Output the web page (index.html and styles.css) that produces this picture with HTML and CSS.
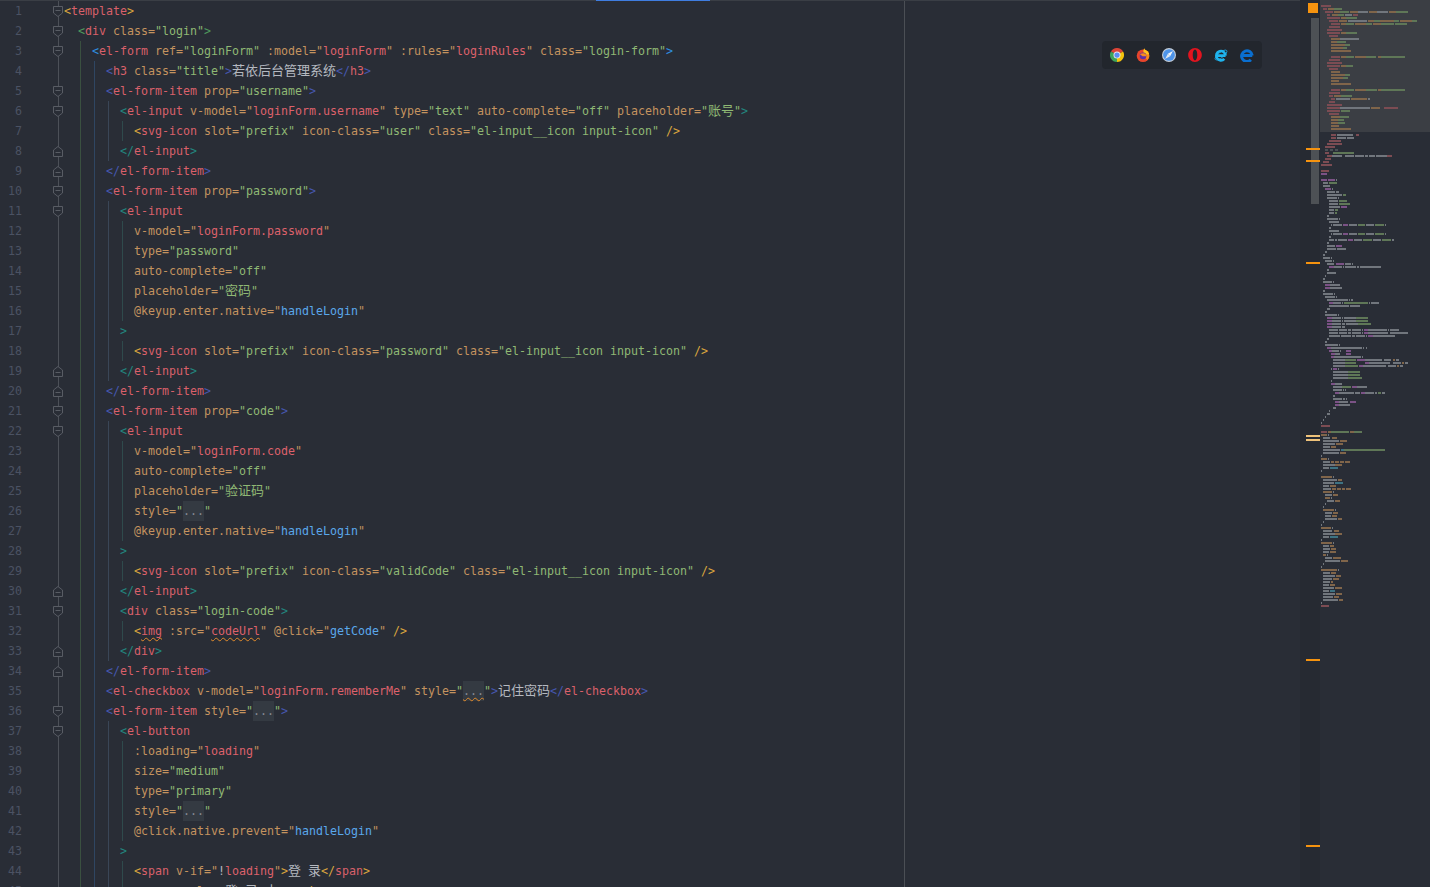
FILE: index.html
```
<!DOCTYPE html>
<html lang="zh">
<head>
<meta charset="utf-8">
<title>Login.vue</title>
<link rel="stylesheet" href="styles.css">
</head>
<body>
<svg class="defs" width="0" height="0" aria-hidden="true">
<symbol id="fold-open" viewBox="0 0 10 11"><path d="M.5 .5h9v6.5l-4.5 3.5-4.5-3.5z" class="fm"/><path d="M2.5 4.5h5" class="fm"/></symbol>
<symbol id="fold-close" viewBox="0 0 10 11"><path d="M.5 10.5h9v-6.5l-4.5-3.5-4.5 3.5z" class="fm"/><path d="M2.5 6.5h5" class="fm"/></symbol>
</svg>
<div class="app">
<main class="editor">
<div class="rows">
<div class="row"><span class="num">1</span><span class="fold"><svg class="fi"><use href="#fold-open"/></svg></span><code class="code"><span class="y">&lt;</span><span class="t">template</span><span class="y">&gt;</span></code></div>
<div class="row"><span class="num">2</span><span class="fold"><svg class="fi"><use href="#fold-open"/></svg></span><code class="code"><i class="g0"></i><span class="g">&lt;</span><span class="t">div</span> <span class="a">class=</span><span class="s">"login"</span><span class="g">&gt;</span></code></div>
<div class="row"><span class="num">3</span><span class="fold"><svg class="fi"><use href="#fold-open"/></svg></span><code class="code"><i class="g0"></i><i class="g1"></i><span class="l">&lt;</span><span class="t">el-form</span> <span class="a">ref=</span><span class="s">"loginForm"</span> <span class="a">:model="</span><span class="r">loginForm</span><span class="a">"</span> <span class="a">:rules="</span><span class="r">loginRules</span><span class="a">"</span> <span class="a">class=</span><span class="s">"login-form"</span><span class="l">&gt;</span></code></div>
<div class="row"><span class="num">4</span><span class="fold"></span><code class="code"><i class="g0"></i><i class="g1"></i><i class="g2"></i><span class="n">&lt;</span><span class="t">h3</span> <span class="a">class=</span><span class="s">"title"</span><span class="n">&gt;</span><span class="c">若依后台管理系统</span><span class="n">&lt;/</span><span class="t">h3</span><span class="n">&gt;</span></code></div>
<div class="row"><span class="num">5</span><span class="fold"><svg class="fi"><use href="#fold-open"/></svg></span><code class="code"><i class="g0"></i><i class="g1"></i><i class="g2"></i><span class="n">&lt;</span><span class="t">el-form-item</span> <span class="a">prop=</span><span class="s">"username"</span><span class="n">&gt;</span></code></div>
<div class="row"><span class="num">6</span><span class="fold"><svg class="fi"><use href="#fold-open"/></svg></span><code class="code"><i class="g0"></i><i class="g1"></i><i class="g2"></i><i class="g3"></i><span class="e">&lt;</span><span class="t">el-input</span> <span class="a">v-model="</span><span class="r">loginForm.username</span><span class="a">"</span> <span class="a">type=</span><span class="s">"text"</span> <span class="a">auto-complete=</span><span class="s">"off"</span> <span class="a">placeholder=</span><span class="s">"<span class="c">账号</span>"</span><span class="e">&gt;</span></code></div>
<div class="row"><span class="num">7</span><span class="fold"></span><code class="code"><i class="g0"></i><i class="g1"></i><i class="g2"></i><i class="g3"></i><i class="g4"></i><span class="y">&lt;</span><span class="t">svg-icon</span> <span class="a">slot=</span><span class="s">"prefix"</span> <span class="a">icon-class=</span><span class="s">"user"</span> <span class="a">class=</span><span class="s">"el-input__icon input-icon"</span> <span class="y">/&gt;</span></code></div>
<div class="row"><span class="num">8</span><span class="fold"><svg class="fi"><use href="#fold-close"/></svg></span><code class="code"><i class="g0"></i><i class="g1"></i><i class="g2"></i><i class="g3"></i><span class="e">&lt;/</span><span class="t">el-input</span><span class="e">&gt;</span></code></div>
<div class="row"><span class="num">9</span><span class="fold"><svg class="fi"><use href="#fold-close"/></svg></span><code class="code"><i class="g0"></i><i class="g1"></i><i class="g2"></i><span class="n">&lt;/</span><span class="t">el-form-item</span><span class="n">&gt;</span></code></div>
<div class="row"><span class="num">10</span><span class="fold"><svg class="fi"><use href="#fold-open"/></svg></span><code class="code"><i class="g0"></i><i class="g1"></i><i class="g2"></i><span class="n">&lt;</span><span class="t">el-form-item</span> <span class="a">prop=</span><span class="s">"password"</span><span class="n">&gt;</span></code></div>
<div class="row"><span class="num">11</span><span class="fold"><svg class="fi"><use href="#fold-open"/></svg></span><code class="code"><i class="g0"></i><i class="g1"></i><i class="g2"></i><i class="g3"></i><span class="e">&lt;</span><span class="t">el-input</span></code></div>
<div class="row"><span class="num">12</span><span class="fold"></span><code class="code"><i class="g0"></i><i class="g1"></i><i class="g2"></i><i class="g3"></i><i class="g4"></i><span class="a">v-model="</span><span class="r">loginForm.password</span><span class="a">"</span></code></div>
<div class="row"><span class="num">13</span><span class="fold"></span><code class="code"><i class="g0"></i><i class="g1"></i><i class="g2"></i><i class="g3"></i><i class="g4"></i><span class="a">type=</span><span class="s">"password"</span></code></div>
<div class="row"><span class="num">14</span><span class="fold"></span><code class="code"><i class="g0"></i><i class="g1"></i><i class="g2"></i><i class="g3"></i><i class="g4"></i><span class="a">auto-complete=</span><span class="s">"off"</span></code></div>
<div class="row"><span class="num">15</span><span class="fold"></span><code class="code"><i class="g0"></i><i class="g1"></i><i class="g2"></i><i class="g3"></i><i class="g4"></i><span class="a">placeholder=</span><span class="s">"<span class="c">密码</span>"</span></code></div>
<div class="row"><span class="num">16</span><span class="fold"></span><code class="code"><i class="g0"></i><i class="g1"></i><i class="g2"></i><i class="g3"></i><i class="g4"></i><span class="a">@keyup.enter.native="</span><span class="h">handleLogin</span><span class="a">"</span></code></div>
<div class="row"><span class="num">17</span><span class="fold"></span><code class="code"><i class="g0"></i><i class="g1"></i><i class="g2"></i><i class="g3"></i><span class="e">&gt;</span></code></div>
<div class="row"><span class="num">18</span><span class="fold"></span><code class="code"><i class="g0"></i><i class="g1"></i><i class="g2"></i><i class="g3"></i><i class="g4"></i><span class="y">&lt;</span><span class="t">svg-icon</span> <span class="a">slot=</span><span class="s">"prefix"</span> <span class="a">icon-class=</span><span class="s">"password"</span> <span class="a">class=</span><span class="s">"el-input__icon input-icon"</span> <span class="y">/&gt;</span></code></div>
<div class="row"><span class="num">19</span><span class="fold"><svg class="fi"><use href="#fold-close"/></svg></span><code class="code"><i class="g0"></i><i class="g1"></i><i class="g2"></i><i class="g3"></i><span class="e">&lt;/</span><span class="t">el-input</span><span class="e">&gt;</span></code></div>
<div class="row"><span class="num">20</span><span class="fold"><svg class="fi"><use href="#fold-close"/></svg></span><code class="code"><i class="g0"></i><i class="g1"></i><i class="g2"></i><span class="n">&lt;/</span><span class="t">el-form-item</span><span class="n">&gt;</span></code></div>
<div class="row"><span class="num">21</span><span class="fold"><svg class="fi"><use href="#fold-open"/></svg></span><code class="code"><i class="g0"></i><i class="g1"></i><i class="g2"></i><span class="n">&lt;</span><span class="t">el-form-item</span> <span class="a">prop=</span><span class="s">"code"</span><span class="n">&gt;</span></code></div>
<div class="row"><span class="num">22</span><span class="fold"><svg class="fi"><use href="#fold-open"/></svg></span><code class="code"><i class="g0"></i><i class="g1"></i><i class="g2"></i><i class="g3"></i><span class="e">&lt;</span><span class="t">el-input</span></code></div>
<div class="row"><span class="num">23</span><span class="fold"></span><code class="code"><i class="g0"></i><i class="g1"></i><i class="g2"></i><i class="g3"></i><i class="g4"></i><span class="a">v-model="</span><span class="r">loginForm.code</span><span class="a">"</span></code></div>
<div class="row"><span class="num">24</span><span class="fold"></span><code class="code"><i class="g0"></i><i class="g1"></i><i class="g2"></i><i class="g3"></i><i class="g4"></i><span class="a">auto-complete=</span><span class="s">"off"</span></code></div>
<div class="row"><span class="num">25</span><span class="fold"></span><code class="code"><i class="g0"></i><i class="g1"></i><i class="g2"></i><i class="g3"></i><i class="g4"></i><span class="a">placeholder=</span><span class="s">"<span class="c">验证码</span>"</span></code></div>
<div class="row"><span class="num">26</span><span class="fold"></span><code class="code"><i class="g0"></i><i class="g1"></i><i class="g2"></i><i class="g3"></i><i class="g4"></i><span class="a">style=</span><span class="s">"</span><span class="f">...</span><span class="s">"</span></code></div>
<div class="row"><span class="num">27</span><span class="fold"></span><code class="code"><i class="g0"></i><i class="g1"></i><i class="g2"></i><i class="g3"></i><i class="g4"></i><span class="a">@keyup.enter.native="</span><span class="h">handleLogin</span><span class="a">"</span></code></div>
<div class="row"><span class="num">28</span><span class="fold"></span><code class="code"><i class="g0"></i><i class="g1"></i><i class="g2"></i><i class="g3"></i><span class="e">&gt;</span></code></div>
<div class="row"><span class="num">29</span><span class="fold"></span><code class="code"><i class="g0"></i><i class="g1"></i><i class="g2"></i><i class="g3"></i><i class="g4"></i><span class="y">&lt;</span><span class="t">svg-icon</span> <span class="a">slot=</span><span class="s">"prefix"</span> <span class="a">icon-class=</span><span class="s">"validCode"</span> <span class="a">class=</span><span class="s">"el-input__icon input-icon"</span> <span class="y">/&gt;</span></code></div>
<div class="row"><span class="num">30</span><span class="fold"><svg class="fi"><use href="#fold-close"/></svg></span><code class="code"><i class="g0"></i><i class="g1"></i><i class="g2"></i><i class="g3"></i><span class="e">&lt;/</span><span class="t">el-input</span><span class="e">&gt;</span></code></div>
<div class="row"><span class="num">31</span><span class="fold"><svg class="fi"><use href="#fold-open"/></svg></span><code class="code"><i class="g0"></i><i class="g1"></i><i class="g2"></i><i class="g3"></i><span class="e">&lt;</span><span class="t">div</span> <span class="a">class=</span><span class="s">"login-code"</span><span class="e">&gt;</span></code></div>
<div class="row"><span class="num">32</span><span class="fold"></span><code class="code"><i class="g0"></i><i class="g1"></i><i class="g2"></i><i class="g3"></i><i class="g4"></i><span class="y">&lt;</span><span class="t w">img</span> <span class="a">:src="</span><span class="r w">codeUrl</span><span class="a">"</span> <span class="a">@click="</span><span class="h">getCode</span><span class="a">"</span> <span class="y">/&gt;</span></code></div>
<div class="row"><span class="num">33</span><span class="fold"><svg class="fi"><use href="#fold-close"/></svg></span><code class="code"><i class="g0"></i><i class="g1"></i><i class="g2"></i><i class="g3"></i><span class="e">&lt;/</span><span class="t">div</span><span class="e">&gt;</span></code></div>
<div class="row"><span class="num">34</span><span class="fold"><svg class="fi"><use href="#fold-close"/></svg></span><code class="code"><i class="g0"></i><i class="g1"></i><i class="g2"></i><span class="n">&lt;/</span><span class="t">el-form-item</span><span class="n">&gt;</span></code></div>
<div class="row"><span class="num">35</span><span class="fold"></span><code class="code"><i class="g0"></i><i class="g1"></i><i class="g2"></i><span class="n">&lt;</span><span class="t">el-checkbox</span> <span class="a">v-model="</span><span class="r">loginForm.rememberMe</span><span class="a">"</span> <span class="a">style=</span><span class="s">"</span><span class="f w">...</span><span class="s">"</span><span class="n">&gt;</span><span class="c">记住密码</span><span class="n">&lt;/</span><span class="t">el-checkbox</span><span class="n">&gt;</span></code></div>
<div class="row"><span class="num">36</span><span class="fold"><svg class="fi"><use href="#fold-open"/></svg></span><code class="code"><i class="g0"></i><i class="g1"></i><i class="g2"></i><span class="n">&lt;</span><span class="t">el-form-item</span> <span class="a">style=</span><span class="s">"</span><span class="f">...</span><span class="s">"</span><span class="n">&gt;</span></code></div>
<div class="row"><span class="num">37</span><span class="fold"><svg class="fi"><use href="#fold-open"/></svg></span><code class="code"><i class="g0"></i><i class="g1"></i><i class="g2"></i><i class="g3"></i><span class="e">&lt;</span><span class="t">el-button</span></code></div>
<div class="row"><span class="num">38</span><span class="fold"></span><code class="code"><i class="g0"></i><i class="g1"></i><i class="g2"></i><i class="g3"></i><i class="g4"></i><span class="a">:loading="</span><span class="r">loading</span><span class="a">"</span></code></div>
<div class="row"><span class="num">39</span><span class="fold"></span><code class="code"><i class="g0"></i><i class="g1"></i><i class="g2"></i><i class="g3"></i><i class="g4"></i><span class="a">size=</span><span class="s">"medium"</span></code></div>
<div class="row"><span class="num">40</span><span class="fold"></span><code class="code"><i class="g0"></i><i class="g1"></i><i class="g2"></i><i class="g3"></i><i class="g4"></i><span class="a">type=</span><span class="s">"primary"</span></code></div>
<div class="row"><span class="num">41</span><span class="fold"></span><code class="code"><i class="g0"></i><i class="g1"></i><i class="g2"></i><i class="g3"></i><i class="g4"></i><span class="a">style=</span><span class="s">"</span><span class="f">...</span><span class="s">"</span></code></div>
<div class="row"><span class="num">42</span><span class="fold"></span><code class="code"><i class="g0"></i><i class="g1"></i><i class="g2"></i><i class="g3"></i><i class="g4"></i><span class="a">@click.native.prevent="</span><span class="h">handleLogin</span><span class="a">"</span></code></div>
<div class="row"><span class="num">43</span><span class="fold"></span><code class="code"><i class="g0"></i><i class="g1"></i><i class="g2"></i><i class="g3"></i><span class="e">&gt;</span></code></div>
<div class="row"><span class="num">44</span><span class="fold"></span><code class="code"><i class="g0"></i><i class="g1"></i><i class="g2"></i><i class="g3"></i><i class="g4"></i><span class="y">&lt;</span><span class="t">span</span> <span class="a">v-if="</span><span class="p">!</span><span class="r">loading</span><span class="a">"</span><span class="y">&gt;</span><span class="c">登</span> <span class="c">录</span><span class="y">&lt;/</span><span class="t">span</span><span class="y">&gt;</span></code></div>
<div class="row"><span class="num">45</span><span class="fold"></span><code class="code"><i class="g0"></i><i class="g1"></i><i class="g2"></i><i class="g3"></i><i class="g4"></i><span class="y">&lt;</span><span class="t">span</span> <span class="a">v-else</span><span class="y">&gt;</span><span class="c">登</span> <span class="c">录</span> <span class="c">中</span><span class="p">...</span><span class="y">&lt;/</span><span class="t">span</span><span class="y">&gt;</span></code></div>
</div>
<div class="margin-line"></div>
<div class="tab-mark"></div>
<nav class="browsers">
<svg class="bi" viewBox="0 0 16 16"><path d="M8 8L1.07 4A8 8 0 0 1 14.93 4Z" fill="#db4437"/><path d="M8 8L14.93 4A8 8 0 0 1 8 16Z" fill="#f4c20d"/><path d="M8 8L8 16A8 8 0 0 1 1.07 4Z" fill="#3da35a"/><circle cx="8" cy="8" r="4" fill="#e8eaed"/><circle cx="8" cy="8" r="3" fill="#5a8df0"/></svg>
<svg class="bi" viewBox="0 0 16 16"><circle cx="8" cy="8.8" r="7.2" fill="#e8452c"/><path d="M8 1.600a7.200 7.200 0 0 1 7.200 7.200c0 2-.8 3.600-2 4.800L8 9z" fill="#f78a1d"/><path d="M9.500 0c.3 1.800 1.500 2.500 3 3.300 1.300.8 2.300 2.200 2.500 3.800L10.500 7.500C9 6 8.500 3 9.500 0z" fill="#ffc21f"/><circle cx="8" cy="9" r="3.800" fill="#5b2fa8"/><path d="M4.500 7c1.500-1 3.500-1.200 5.500-.6 1.300.5 1.800 1.600 1.600 2.900L7.500 9.300z" fill="#f78a1d"/></svg>
<svg class="bi" viewBox="0 0 16 16"><circle cx="8" cy="8" r="8" fill="#c3cdd9"/><circle cx="8" cy="8" r="6.700" fill="#4d94ea"/><path d="M12.500 3.500L9.300 9.300 6.700 6.700z" fill="#f4f6f9"/><path d="M3.500 12.500L6.700 6.700 9.300 9.300z" fill="#dce6f2"/></svg>
<svg class="bi" viewBox="0 0 16 16"><path fill-rule="evenodd" d="M8 0c4.200 0 7.800 3.500 7.800 8S12.200 16 8 16 .2 12.500.2 8 3.800 0 8 0zm0 1.800C6.500 1.800 5.400 4.600 5.400 8s1.100 6.200 2.600 6.200S10.600 11.400 10.600 8 9.500 1.800 8 1.800z" fill="#e3141f"/></svg>
<svg class="bi" viewBox="0 0 16 16"><ellipse cx="8" cy="8" rx="8.300" ry="3" transform="rotate(-38 8 8)" fill="none" stroke="#1a9fd8" stroke-width="1"/><path d="M2.800 8.700H13.200M13.200 8.700A5.300 5.300 0 1 0 11.800 12.400" fill="none" stroke="#1fb4ee" stroke-width="3"/></svg>
<svg class="bi" viewBox="0 0 16 16"><path d="M1.800 8.600H14M14 8.600A6.100 6.100 0 1 0 12.400 13.400" fill="none" stroke="#0a6fd0" stroke-width="3.400"/></svg>
</nav>
</main>
<aside class="panel">
<svg class="mini" viewBox="0 0 390 2661" width="130" height="887" shape-rendering="crispEdges">
<rect x="0" y="0" width="60" height="2661" class="m-strip"/>
<rect x="60" y="0" width="330" height="396" class="m-slider"/>
<rect x="33" y="54" width="24" height="558" class="m-thumb"/>
<rect x="24" y="9" width="30" height="30" class="m-warn"/>
<path class="m-r" d="M63 18h30M69 27h12M75 36h24M81 45h9M159 45h15M81 54h39M87 63h27M93 72h27M87 81h33M81 90h45M81 99h39M87 108h27M93 171h27M87 180h33M81 189h45M81 198h39M87 207h27M93 270h27M87 279h33M87 288h12M93 297h12M87 306h18M81 315h45M81 324h39M252 324h42M81 333h39M87 342h30M93 405h15M168 405h9M93 414h15M87 423h36M81 432h45M75 441h30M75 459h12M81 468h15M261 468h15M75 477h18M69 486h18M63 495h33M63 513h24M63 1278h27M63 1296h18M63 1818h24"/>
<path class="m-g" d="M102 27h24M120 36h27M288 36h36M114 45h18M138 54h33M222 63h18M282 63h15M336 63h15M138 72h24M198 72h18M243 72h39M285 72h36M138 99h33M111 126h27M135 135h15M129 144h12M138 171h24M198 171h30M243 171h72M138 198h21M135 225h15M129 234h15M138 270h24M198 270h33M243 270h72M123 288h33M123 333h27M120 351h27M114 360h18M114 369h21M99 459h63M87 549h24M129 585h9M117 603h24M117 612h33M105 630h9M105 639h6M174 675h21M225 675h27M174 702h21M225 702h27M189 720h27M246 720h27M132 909h72M168 954h36M168 963h36M174 972h39M135 1080h33M135 1089h33M135 1098h39M144 1116h36M144 1125h36M144 1134h42M126 1161h27M234 1179h9M93 1296h54M162 1296h24M132 1350h123"/>
<path class="m-o" d="M84 27h18M102 36h18M150 36h24M207 36h24M267 36h21M96 45h18M123 54h15M117 63h24M204 63h18M240 63h42M300 63h36M123 72h15M165 72h33M219 72h24M123 99h15M93 117h27M93 126h18M93 135h42M93 144h36M93 153h60M123 171h15M165 171h33M234 171h9M123 198h15M93 216h27M93 225h42M93 234h36M93 243h24M93 252h60M123 270h15M165 270h33M234 270h9M102 288h21M153 297h48M213 324h27M93 351h27M93 360h21M93 369h21M93 378h24M93 387h60M84 1296h9M150 1296h12M279 1080h6M306 1089h6M291 1098h6M63 1305h18M96 1314h15M120 1323h21M108 1332h21M93 1341h15M120 1359h18M63 1377h18M93 1386h9M105 1386h12M120 1386h12M135 1386h15M105 1395h21M63 1431h33M114 1440h12M90 1458h18M96 1467h12M111 1467h12M126 1467h9M138 1467h15M69 1476h27M99 1485h15M75 1494h15M105 1503h15M69 1530h33M99 1539h15M96 1548h15M114 1557h12M63 1584h30M102 1593h15M105 1602h21M63 1629h33M90 1638h12M93 1647h15M90 1656h18M69 1665h9M99 1674h24M123 1683h21M63 1710h48M93 1719h15M108 1728h15M99 1737h18M93 1746h6M90 1755h15M105 1764h21M108 1782h18M102 1791h15M117 1800h12"/>
<path class="m-a" d="M135 45h21M144 63h57M174 36h30M231 36h33M120 117h57M108 297h42M204 297h6M120 324h90M111 405h48M111 414h27M141 414h21M96 468h30M135 468h27M165 468h27M195 468h9M207 468h18M228 468h33M108 540h3M69 549h15M69 558h21M96 567h3M81 576h24M108 576h9M81 585h45M81 594h30M114 594h3M87 603h27M87 612h27M87 621h33M87 630h15M87 639h15M81 648h6M81 657h33M117 657h3M87 666h30M93 675h3M99 675h27M147 675h24M198 675h24M255 675h3M87 684h6M87 693h30M93 702h3M99 702h27M147 702h24M198 702h24M255 702h3M87 711h6M87 720h15M105 720h6M114 720h27M162 720h24M219 720h24M276 720h6M81 729h6M81 738h24M81 747h27M111 747h27M75 756h6M69 765h6M69 774h21M93 774h3M75 783h21M99 783h3M81 792h21M135 792h18M156 792h3M102 801h24M129 801h3M135 801h33M171 801h6M180 801h63M81 810h6M81 819h27M75 828h3M69 837h6M69 846h27M99 846h3M90 855h30M90 864h36M69 873h6M69 882h30M102 882h3M75 891h30M108 891h3M81 900h63M147 900h3M153 900h6M99 909h24M126 909h3M207 909h3M213 909h24M87 918h60M150 918h3M153 918h27M81 927h9M75 936h6M75 945h36M114 945h3M96 954h27M126 954h3M132 954h36M96 963h27M126 963h3M132 963h36M96 972h27M126 972h9M138 972h36M96 981h27M126 981h9M87 990h27M117 990h24M144 990h9M156 990h27M186 990h3M204 990h57M264 990h3M270 990h27M87 999h27M117 999h24M144 999h9M156 999h27M186 999h3M204 999h60M270 999h54M87 1008h33M123 1008h30M156 1008h9M168 1008h27M198 1008h3M219 1008h66M81 1017h6M75 1026h6M75 1035h39M117 1035h3M93 1044h93M189 1044h3M198 1044h3M96 1053h21M120 1053h3M105 1062h15M102 1071h81M186 1071h3M99 1080h36M195 1080h51M252 1080h21M288 1080h9M99 1089h36M207 1089h63M279 1089h24M315 1089h9M99 1098h36M189 1098h69M264 1098h24M300 1098h9M93 1107h3M114 1107h3M99 1116h45M99 1125h45M99 1134h45M93 1143h3M105 1152h21M99 1161h27M171 1161h30M99 1170h27M129 1170h3M135 1170h3M117 1179h45M165 1179h15M195 1179h27M225 1179h6M246 1179h9M99 1188h6M99 1197h27M129 1197h6M138 1197h3M117 1206h27M117 1215h33M99 1224h9M87 1233h3M81 1242h9M75 1251h3M69 1260h3M63 1269h3M84 1305h3M69 1314h21M69 1323h48M69 1332h36M69 1341h21M69 1350h51M69 1359h48M63 1368h3M84 1377h3M69 1386h21M69 1395h36M69 1404h18M63 1413h3M99 1431h3M69 1440h42M69 1449h33M69 1458h18M69 1467h24M99 1476h3M75 1485h21M93 1494h3M81 1503h21M75 1512h3M69 1521h3M105 1530h3M75 1539h21M75 1548h18M75 1557h36M69 1566h3M63 1575h3M96 1584h3M69 1593h27M69 1602h36M69 1611h18M63 1620h3M99 1629h3M69 1638h18M69 1647h21M69 1656h18M81 1665h3M75 1674h21M75 1683h45M69 1692h3M63 1701h3M114 1710h3M69 1719h21M69 1728h36M69 1737h27M69 1746h21M69 1755h18M69 1764h33M69 1773h18M69 1782h36M69 1791h30M69 1800h45M63 1809h3"/>
<path class="m-p" d="M63 522h18M63 540h18M84 540h21M75 567h18M123 621h18M129 675h15M129 702h15M144 720h15M108 738h18M108 792h24M87 801h15M75 855h15M75 864h15M87 909h12M81 954h15M81 963h15M81 972h15M81 981h15M192 990h12M192 999h12M204 1008h15M81 1044h12M87 1053h9M138 1053h15M93 1062h12M138 1062h15M93 1071h9M171 1080h24M195 1089h12M177 1098h12M99 1107h12M93 1152h12M156 1161h15M105 1179h12M183 1179h12M105 1206h12M150 1206h18M105 1215h12"/>
<path class="m-c" d="M75 450h9M90 450h9M105 450h9"/>
<path class="m-t" d="M123 1350h9M90 1404h24M105 1449h24M90 1611h24M90 1773h15"/>
<rect x="18" y="444" width="42" height="6" class="m-warn"/>
<rect x="18" y="480" width="42" height="6" class="m-warn"/>
<rect x="18" y="786" width="42" height="6" class="m-warn"/>
<rect x="18" y="1305" width="42" height="6" class="m-gold"/>
<rect x="18" y="1317" width="42" height="6" class="m-gold"/>
<rect x="18" y="1977" width="42" height="6" class="m-warn"/>
<rect x="18" y="2535" width="42" height="6" class="m-warn"/>
</svg>
</aside>
</div>
</body>
</html>
```
FILE: styles.css
```
html, body {
  margin: 0;
  height: 100%;
  background: #292d36;
  overflow: hidden;
}

.defs {
  position: absolute;
}

.app {
  display: flex;
  width: 1430px;
  height: 887px;
  overflow: hidden;
}

.editor {
  position: relative;
  flex: 1;
  min-width: 0;
  box-sizing: border-box;
  border-top: 1px solid #3a3e45;
}

.rows {
  display: flex;
  flex-direction: column;
}

.row {
  display: flex;
  height: 20px;
  flex: none;
  font-family: "DejaVu Sans Mono", monospace;
  font-size: 11.63px;
  line-height: 20px;
}

.num {
  width: 22px;
  text-align: right;
  color: #4b5263;
  margin-right: 29px;
}

.fold {
  display: flex;
  align-items: center;
  justify-content: center;
  width: 14px;
  margin-right: -1px;
  background: linear-gradient(#4c5058, #4c5058) center / 1px 100% no-repeat;
}

.fi {
  width: 10px;
  height: 11px;
}

.fm {
  fill: #292d36;
  stroke: #585c64;
  stroke-width: 1;
}

.code {
  display: block;
  font: inherit;
  white-space: pre;
  color: #b5b9c0;
}

.code i {
  display: inline-block;
  width: 14px;
  height: 20px;
  vertical-align: top;
}

.g1 { background: linear-gradient(#3a5040, #3a5040) 2px 0 / 1px 100% no-repeat; }
.g2 { background: linear-gradient(#2f4662, #2f4662) 2px 0 / 1px 100% no-repeat; }
.g3 { background: linear-gradient(#3a4657, #3a4657) 2px 0 / 1px 100% no-repeat; }
.g4 { background: linear-gradient(#2f4a4c, #2f4a4c) 2px 0 / 1px 100% no-repeat; }

.t { color: #d9606a; }
.a { color: #c4935f; }
.s { color: #8fb874; }
.r { color: #dd616b; }
.h { color: #5aa8ec; }
.p { color: #b5b9c0; }
.y { color: #dba63e; }
.g { color: #4f9a5c; }
.l { color: #2f90e0; }
.n { color: #4658b0; }
.e { color: #23877f; }

.c {
  font-family: "Noto Sans CJK SC", sans-serif;
  font-size: 13px;
  line-height: 1;
  color: #b5b9c0;
}

.s .c { color: #8fb874; }

.f {
  display: inline-block;
  height: 20px;
  vertical-align: top;
  background: #343a42;
  color: #868b93;
}

.w {
  text-decoration: underline wavy #e08a2c 1px;
  text-underline-offset: 2px;
}

.margin-line {
  position: absolute;
  left: 904px;
  top: 0;
  width: 1px;
  height: 100%;
  background: #4b4f55;
}

.tab-mark {
  position: absolute;
  left: 596px;
  top: -1px;
  width: 114px;
  height: 1px;
  background: #3f7de0;
}

.browsers {
  position: absolute;
  left: 1102px;
  top: 40px;
  display: flex;
  align-items: center;
  gap: 12px;
  box-sizing: border-box;
  width: 160px;
  height: 28px;
  padding: 0 8px;
  border-radius: 4px;
  background: #22262d;
}

.bi {
  width: 14px;
  height: 14px;
  flex: none;
}

.panel {
  flex: none;
  width: 130px;
}

.mini {
  display: block;
}

.m-strip { fill: #262a32; }
.m-slider { fill: #3b3e44; }
.m-thumb { fill: #4d5155; }
.m-warn { fill: #f5930f; }
.m-gold { fill: #eec27a; }

.mini path {
  fill: none;
  stroke-width: 6;
}

.m-r { stroke: #7c4c53; }
.m-g { stroke: #5f7757; }
.m-o { stroke: #80654a; }
.m-a { stroke: #71767d; }
.m-p { stroke: #7b5286; }
.m-c { stroke: #4a4f55; }
.m-t { stroke: #3e7383; }
```
